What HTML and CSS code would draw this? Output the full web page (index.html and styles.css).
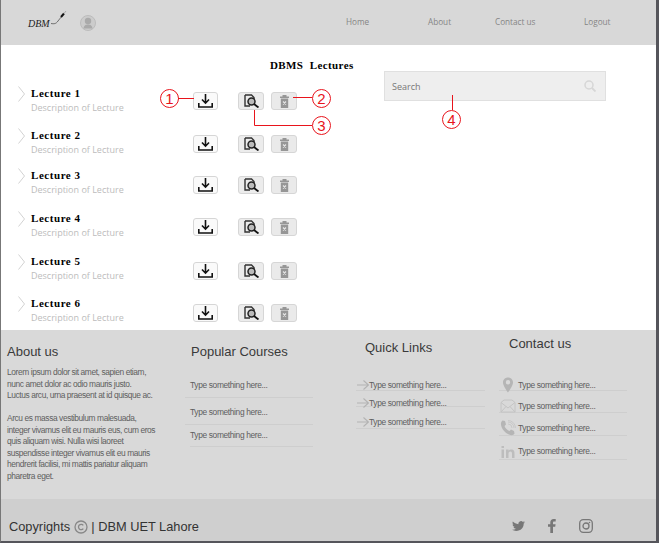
FILE: index.html
```html
<!DOCTYPE html>
<html lang="en">

<head>
    <meta charset="UTF-8" />
    <meta name="viewport" content="width=device-width, initial-scale=1.0" />
    <title>DBMS Lectures</title>
    <link rel="stylesheet" href="styles.css">
</head>

<body>
    <svg class="defs" width="0" height="0">
        <symbol id="i-chevron" viewBox="0 0 7 16">
            <path d="M0.500 0.500L6.500 8L0.500 15.500" fill="none" stroke="#d2d2d2" stroke-width="1" />
        </symbol>
        <symbol id="i-download" viewBox="0 0 15 14">
            <path d="M7.500 0V9M4 5.500L7.500 9.200L11 5.500" fill="none" stroke="#111" stroke-width="1.600" />
            <path d="M0.800 9V13H14.200V9" fill="none" stroke="#111" stroke-width="1.600" />
        </symbol>
        <symbol id="i-view" viewBox="0 0 15 14">
            <path d="M1 1H7.500L10 3.500V5M1 1V12H6" fill="none" stroke="#333" stroke-width="1.400" />
            <circle cx="7.500" cy="7.500" r="3.500" fill="#bbb" stroke="#222" stroke-width="1.500" />
            <path d="M10 10L14.500 13.500" stroke="#111" stroke-width="1.800" />
        </symbol>
        <symbol id="i-trash" viewBox="0 0 9 13">
            <path d="M0 1.500H9V3H0zM2.500 0H6.500V1.500H2.500zM0.800 3.500H8.200V13H0.800z" fill="#969696" />
            <path d="M3 6.500L6 9.500M6 6.500L3 9.500" stroke="#e4e4e4" stroke-width="1.200" />
        </symbol>
        <symbol id="i-arrow" viewBox="0 0 12 10">
            <path d="M0 5H11M6.500 0.500L11.500 5L6.500 9.500" fill="none" stroke="#b3b3b3" stroke-width="1.100" />
        </symbol>
    </svg>

    <div class="page">
        <header class="topbar">
            <div class="logo">
                <span class="logo-text">DBM</span>
                <svg class="logo-pen" width="16" height="16" viewBox="0 0 16 16">
                    <path d="M0 13.500C3 14 5 14 7 11L11 6" fill="none" stroke="#444" stroke-width="0.700" />
                    <path d="M10 7L13 3.500" stroke="#111" stroke-width="2" />
                    <path d="M13 3.500L15 1" stroke="#999" stroke-width="0.800" />
                </svg>
            </div>
            <svg class="avatar" width="16" height="16" viewBox="0 0 16 16">
                <circle cx="8" cy="8" r="7.500" fill="#ccc" stroke="#bcbcbc" />
                <circle cx="8" cy="6" r="3.200" fill="#aaa" />
                <path d="M3.500 13.500C4 10 6 9.500 8 9.500S12 10 12.500 13.500Z" fill="#aaa" />
            </svg>
            <nav class="nav">
                <a>Home</a>
                <a>About</a>
                <a>Contact us</a>
                <a>Logout</a>
            </nav>
        </header>

        <main class="content">
            <section class="lectures">
                <h1>DBMS&nbsp; Lectures</h1>
                <ul class="lecture-list">
                    <li class="lecture">
                        <svg class="chevron"><use href="#i-chevron" /></svg>
                        <div class="lecture-text">
                            <h3>Lecture 1</h3>
                            <p>Description of Lecture</p>
                        </div>
                        <button class="btn btn-dl"><svg width="15" height="14"><use href="#i-download" /></svg></button>
                        <button class="btn btn-view"><svg width="15" height="14"><use href="#i-view" /></svg></button>
                        <button class="btn btn-del"><svg width="9" height="13"><use href="#i-trash" /></svg></button>
                    </li>
                    <li class="lecture">
                        <svg class="chevron"><use href="#i-chevron" /></svg>
                        <div class="lecture-text">
                            <h3>Lecture 2</h3>
                            <p>Description of Lecture</p>
                        </div>
                        <button class="btn btn-dl"><svg width="15" height="14"><use href="#i-download" /></svg></button>
                        <button class="btn btn-view"><svg width="15" height="14"><use href="#i-view" /></svg></button>
                        <button class="btn btn-del"><svg width="9" height="13"><use href="#i-trash" /></svg></button>
                    </li>
                    <li class="lecture">
                        <svg class="chevron"><use href="#i-chevron" /></svg>
                        <div class="lecture-text">
                            <h3>Lecture 3</h3>
                            <p>Description of Lecture</p>
                        </div>
                        <button class="btn btn-dl"><svg width="15" height="14"><use href="#i-download" /></svg></button>
                        <button class="btn btn-view"><svg width="15" height="14"><use href="#i-view" /></svg></button>
                        <button class="btn btn-del"><svg width="9" height="13"><use href="#i-trash" /></svg></button>
                    </li>
                    <li class="lecture">
                        <svg class="chevron"><use href="#i-chevron" /></svg>
                        <div class="lecture-text">
                            <h3>Lecture 4</h3>
                            <p>Description of Lecture</p>
                        </div>
                        <button class="btn btn-dl"><svg width="15" height="14"><use href="#i-download" /></svg></button>
                        <button class="btn btn-view"><svg width="15" height="14"><use href="#i-view" /></svg></button>
                        <button class="btn btn-del"><svg width="9" height="13"><use href="#i-trash" /></svg></button>
                    </li>
                    <li class="lecture">
                        <svg class="chevron"><use href="#i-chevron" /></svg>
                        <div class="lecture-text">
                            <h3>Lecture 5</h3>
                            <p>Description of Lecture</p>
                        </div>
                        <button class="btn btn-dl"><svg width="15" height="14"><use href="#i-download" /></svg></button>
                        <button class="btn btn-view"><svg width="15" height="14"><use href="#i-view" /></svg></button>
                        <button class="btn btn-del"><svg width="9" height="13"><use href="#i-trash" /></svg></button>
                    </li>
                    <li class="lecture">
                        <svg class="chevron"><use href="#i-chevron" /></svg>
                        <div class="lecture-text">
                            <h3>Lecture 6</h3>
                            <p>Description of Lecture</p>
                        </div>
                        <button class="btn btn-dl"><svg width="15" height="14"><use href="#i-download" /></svg></button>
                        <button class="btn btn-view"><svg width="15" height="14"><use href="#i-view" /></svg></button>
                        <button class="btn btn-del"><svg width="9" height="13"><use href="#i-trash" /></svg></button>
                    </li>
                </ul>
            </section>

            <div class="search">
                <span>Search</span>
                <svg width="12" height="12" viewBox="0 0 12 12">
                    <circle cx="5" cy="5" r="4" fill="none" stroke="#d6d6d6" stroke-width="1.500" />
                    <path d="M8 8L11.500 11.500" stroke="#d6d6d6" stroke-width="1.800" />
                </svg>
            </div>
        </main>

        <footer class="footer">
            <div class="footer-cols">
                <div class="col">
                    <h2 class="head-about">About us</h2>
                    <p class="about-text">Lorem ipsum dolor sit amet, sapien etiam,<br>nunc amet dolor ac odio mauris justo.<br>Luctus arcu, urna praesent at id quisque ac.<br><br>Arcu es massa vestibulum malesuada,<br>integer vivamus elit eu mauris eus, cum eros<br>quis aliquam wisi. Nulla wisi laoreet<br>suspendisse integer vivamus elit eu mauris<br>hendrerit facilisi, mi mattis pariatur aliquam<br>pharetra eget.</p>
                </div>
                <div class="col">
                    <h2 class="head-courses">Popular Courses</h2>
                    <ul class="links links-courses">
                        <li>Type something here...</li>
                        <li>Type something here...</li>
                        <li>Type something here...</li>
                    </ul>
                </div>
                <div class="col">
                    <h2 class="head-quick">Quick Links</h2>
                    <ul class="links links-quick">
                        <li><svg width="12" height="10"><use href="#i-arrow" /></svg>Type something here...</li>
                        <li><svg width="12" height="10"><use href="#i-arrow" /></svg>Type something here...</li>
                        <li><svg width="12" height="10"><use href="#i-arrow" /></svg>Type something here...</li>
                    </ul>
                </div>
                <div class="col">
                    <h2 class="head-contact">Contact us</h2>
                    <ul class="links links-contact">
                        <li>
                            <svg width="16" height="16" viewBox="0 0 16 16">
                                <path d="M8 0.500C5 0.500 3 2.700 3 5.500C3 9 8 15.500 8 15.500S13 9 13 5.500C13 2.700 11 0.500 8 0.500ZM8 7.500A2.200 2.200 0 1 1 8 3.100A2.200 2.200 0 0 1 8 7.500Z" fill="#b5b5b5" />
                            </svg>Type something here...
                        </li>
                        <li>
                            <svg width="16" height="14" viewBox="0 0 16 14">
                                <path d="M1 3.500L4 1H12L15 3.500V13H1ZM1 3.500L8 9L15 3.500M1 13L6 7.500M15 13L10 7.500" fill="none" stroke="#c4c4c4" stroke-width="1" />
                            </svg>Type something here...
                        </li>
                        <li>
                            <svg width="16" height="16" viewBox="0 0 16 16">
                                <path d="M2.500 0.500L5 1L6 4.500L4.500 6C5 8 7.500 10.500 9.500 11L11 9.500L14 11L14.500 13.500C13.500 15.500 11 15.500 9 14.500C5 13 1.500 8.500 1 5C0.800 3 1.200 1.500 2.500 0.500Z" fill="#b5b5b5" />
                                <path d="M8 4A4 4 0 0 1 12 8M8 2A6 6 0 0 1 14 8M8 0.500A7.500 7.500 0 0 1 15.500 8" fill="none" stroke="#c4c4c4" stroke-width="0.800" />
                            </svg>Type something here...
                        </li>
                        <li>
                            <svg width="14" height="13" viewBox="0 0 14 13">
                                <path d="M0.500 4.500H3V13H0.500ZM0.500 1H3V3H0.500ZM5 4.500H7.500V5.800C8.500 4.400 10 4.200 11.300 4.600C13 5.200 13.500 6.500 13.500 8.500V13H11V8.800C11 7.300 10.500 6.500 9.300 6.500C8 6.500 7.500 7.500 7.500 8.800V13H5Z" fill="#bdbdbd" />
                            </svg>Type something here...
                        </li>
                    </ul>
                </div>
            </div>

            <div class="bottom-bar">
                <span class="copy">Copyrights <span class="copy-mark">
                    <svg width="14" height="14" viewBox="0 0 14 14">
                        <circle cx="7" cy="7" r="6" fill="none" stroke="#888" stroke-width="1.300" />
                        <path d="M9.300 5.300A2.700 2.700 0 1 0 9.300 8.700" fill="none" stroke="#888" stroke-width="1.300" />
                    </svg></span> | DBM UET Lahore</span>
                <div class="social">
                    <svg class="tw" width="13" height="12" viewBox="0 0 24 24" preserveAspectRatio="none">
                        <path d="M23.953 4.570a10 10 0 0 1-2.825.775 4.958 4.958 0 0 0 2.163-2.723c-.951.555-2.005.959-3.127 1.184a4.920 4.920 0 0 0-8.384 4.482C7.690 8.095 4.067 6.130 1.640 3.162a4.822 4.822 0 0 0-.666 2.475c0 1.710.870 3.213 2.188 4.096a4.904 4.904 0 0 1-2.228-.616v.06a4.923 4.923 0 0 0 3.946 4.827 4.996 4.996 0 0 1-2.212.085 4.936 4.936 0 0 0 4.604 3.417 9.867 9.867 0 0 1-6.102 2.105c-.39 0-.779-.023-1.170-.067a13.995 13.995 0 0 0 7.557 2.209c9.053 0 13.998-7.496 13.998-13.985 0-.21 0-.42-.015-.63A9.935 9.935 0 0 0 24 4.590z" fill="#777" />
                    </svg>
                    <svg class="fb" width="8" height="14" viewBox="0 0 8 14">
                        <path d="M2.300 14V7.800H0V5.300H2.300V3.500C2.300 1.200 3.600 0 5.600 0H7.700V2.500H6.200C5.300 2.500 5 3 5 3.700V5.300H7.600L7.200 7.800H5V14Z" fill="#777" />
                    </svg>
                    <svg class="ig" width="14" height="14" viewBox="0 0 14 14">
                        <rect x="0.700" y="0.700" width="12.600" height="12.600" rx="3.500" fill="none" stroke="#777" stroke-width="1.300" />
                        <circle cx="7" cy="7" r="3" fill="none" stroke="#777" stroke-width="1.300" />
                        <circle cx="10.500" cy="3.500" r="0.800" fill="#777" />
                    </svg>
                </div>
            </div>
        </footer>

        <!-- red callouts over the page -->
        <svg class="callouts" width="659" height="543" viewBox="0 0 659 543">
            <g fill="none" stroke="#e8141c" stroke-width="1">
                <circle cx="169.500" cy="98.500" r="9" />
                <circle cx="321.500" cy="98.500" r="9" />
                <circle cx="321.500" cy="125.500" r="9" />
                <circle cx="451.500" cy="119.500" r="9" />
                <path d="M178 98.500H194M293 97.500H312M254.500 110V125.500H312M452.500 95V110" />
            </g>
            <g class="callout-nums" fill="#e8141c">
                <text x="169.500" y="104">1</text>
                <text x="321.500" y="104">2</text>
                <text x="321.500" y="131">3</text>
                <text x="451.500" y="125">4</text>
            </g>
        </svg>
    </div>
</body>

</html>
```

FILE: styles.css
```css
* {
    box-sizing: border-box;
}

html,
body {
    margin: 0;
    height: 100%;
    overflow: hidden;
    background: #fff;
}

ul {
    list-style: none;
    margin: 0;
    padding: 0;
}

.defs {
    position: absolute;
}

.page {
    position: relative;
    width: 659px;
    height: 543px;
    display: flex;
    flex-direction: column;
    border-left: 1px solid #777;
    border-right: 3px solid #55555b;
    border-bottom: 2px solid #55555b;
    font-family: 'Liberation Sans', Arial, sans-serif;
}

/* top bar */
.topbar {
    height: 45px;
    flex-shrink: 0;
    background: #d8d8d8;
    display: flex;
    align-items: center;
    padding-left: 27px;
}

.logo {
    width: 52px;
    display: flex;
    align-items: center;
    margin-top: -1px;
}

.logo-text {
    font-family: 'Liberation Serif', serif;
    font-style: italic;
    font-size: 10px;
    color: #222;
    margin-top: 3px;
}

.logo-pen {
    margin-top: -9px;
    margin-left: 1px;
}

.avatar {
    margin-top: 1px;
}

.nav {
    display: grid;
    grid-template-columns: 82px 67px 89px auto;
    margin: -2px 0 0 250px;
    font-family: 'Open Sans', sans-serif;
    font-size: 8.2px;
    color: #858585;
}

/* main area */
.content {
    height: 285px;
    flex-shrink: 0;
    display: grid;
    grid-template-columns: 383px 222px;
    background: #fff;
}

.lectures {
    padding-top: 13px;
}

.lectures h1 {
    margin: 0 0 14px;
    padding-left: 269px;
    height: 14px;
    font-family: 'Liberation Serif', serif;
    font-size: 11px;
    line-height: 14px;
    letter-spacing: 0.4px;
    white-space: nowrap;
    color: #000;
}

.lecture-list {
    display: grid;
    grid-template-rows: 42px 40px 43px 43px 42px 34px;
}

.lecture {
    display: flex;
    align-items: flex-start;
    padding-left: 17px;
}

.chevron {
    width: 7px;
    height: 16px;
    margin: 0 6px 0 0;
}

.lecture-text {
    width: 162px;
}

.lecture-text h3 {
    margin: 0;
    font-family: 'Liberation Serif', serif;
    font-size: 11px;
    line-height: 15px;
    letter-spacing: 0.55px;
    color: #000;
}

.lecture-text p {
    margin: 0;
    font-family: 'Open Sans', sans-serif;
    font-size: 9px;
    line-height: 14px;
    color: #bcbcbc;
}

.btn {
    display: flex;
    align-items: center;
    justify-content: center;
    height: 18px;
    margin-top: 7px;
    padding: 0;
    border: 1px solid #d6d6d6;
    border-radius: 3px;
}

.lecture:first-child .btn {
    margin-top: 6px;
}

.lecture:nth-child(3) .btn,
.lecture:nth-child(5) .btn,
.lecture:nth-child(6) .btn {
    margin-top: 8px;
}

.btn-dl {
    width: 25px;
    margin-right: 20px;
    background: #fafafa;
}

.btn-view {
    width: 26px;
    margin-right: 7px;
    background: #ececec;
}

.btn-del {
    width: 26px;
    background: #eaeaea;
}

.search {
    height: 30px;
    margin-top: 26px;
    display: flex;
    align-items: center;
    justify-content: space-between;
    padding: 0 9px 0 7px;
    background: #eee;
    border: 1px solid #e0e0e0;
    font-family: 'Open Sans', sans-serif;
    font-size: 9px;
    color: #777;
}

/* footer */
.footer {
    flex: 1;
    display: flex;
    flex-direction: column;
    background: #d9d9d9;
}

.footer-cols {
    height: 169px;
    display: grid;
    grid-template-columns: 184px 171px 143px 128px;
}

.col h2 {
    height: 40px;
    margin: 0;
    font-size: 13px;
    line-height: 18px;
    font-weight: normal;
    color: #3a3a3a;
}

.head-about {
    padding: 13px 0 0 6px;
}

.head-courses {
    padding: 13px 0 0 6px;
}

.head-quick {
    padding: 9px 0 0 9px;
}

.head-contact {
    padding: 5px 0 0 10px;
}

.about-text {
    margin: -3px 0 0 6px;
    font-size: 8.4px;
    line-height: 11.5px;
    letter-spacing: -0.4px;
    color: #5e5e5e;
    white-space: nowrap;
}

.links li {
    display: flex;
    align-items: flex-end;
    border-bottom: 1px solid #cecece;
    font-size: 8.4px;
    line-height: 10px;
    letter-spacing: -0.35px;
    color: #5e5e5e;
    white-space: nowrap;
}

.links-courses {
    display: grid;
    grid-template-columns: 128px;
    grid-template-rows: 28px 27px 22px;
}

.links-courses li {
    padding: 0 0 7px 5px;
}

.links-courses li:last-child {
    margin-left: 5px;
    padding: 0 0 6px;
}

.links-quick {
    display: grid;
    grid-template-columns: 129px;
    grid-template-rows: 21px 16px 22px;
}

.links-quick li {
    padding: 9px 0 0 1px;
    align-items: center;
}

.links-contact {
    display: grid;
    grid-template-columns: 128px;
    grid-template-rows: 21px 22px 23px 24px;
}

.links-contact li {
    padding: 10px 0 0 1px;
    align-items: center;
}

.links-contact li:nth-child(2) {
    padding-top: 9px;
}

.links-contact li:nth-child(3) {
    padding-top: 8px;
}

.links-contact li:nth-child(4) {
    padding-top: 7px;
}

.links-contact svg {
    width: 16px;
    margin-right: 2px;
    flex-shrink: 0;
}

.bottom-bar {
    flex: 1;
    display: flex;
    align-items: center;
    background: #cfcfcf;
    padding: 12px 0 0 8px;
}

.copy {
    font-size: 12.8px;
    color: #333;
}

.copy-mark svg {
    vertical-align: -3px;
}

.social {
    display: flex;
    align-items: center;
    margin-left: auto;
    margin-right: 63px;
}

.fb {
    margin: 0 23px 0 23px;
}

/* annotations */
.callouts {
    position: absolute;
    left: -1px;
    top: 0;
    pointer-events: none;
}

.callout-nums text {
    font-family: 'Liberation Sans', sans-serif;
    font-size: 15px;
    text-anchor: middle;
}
```
